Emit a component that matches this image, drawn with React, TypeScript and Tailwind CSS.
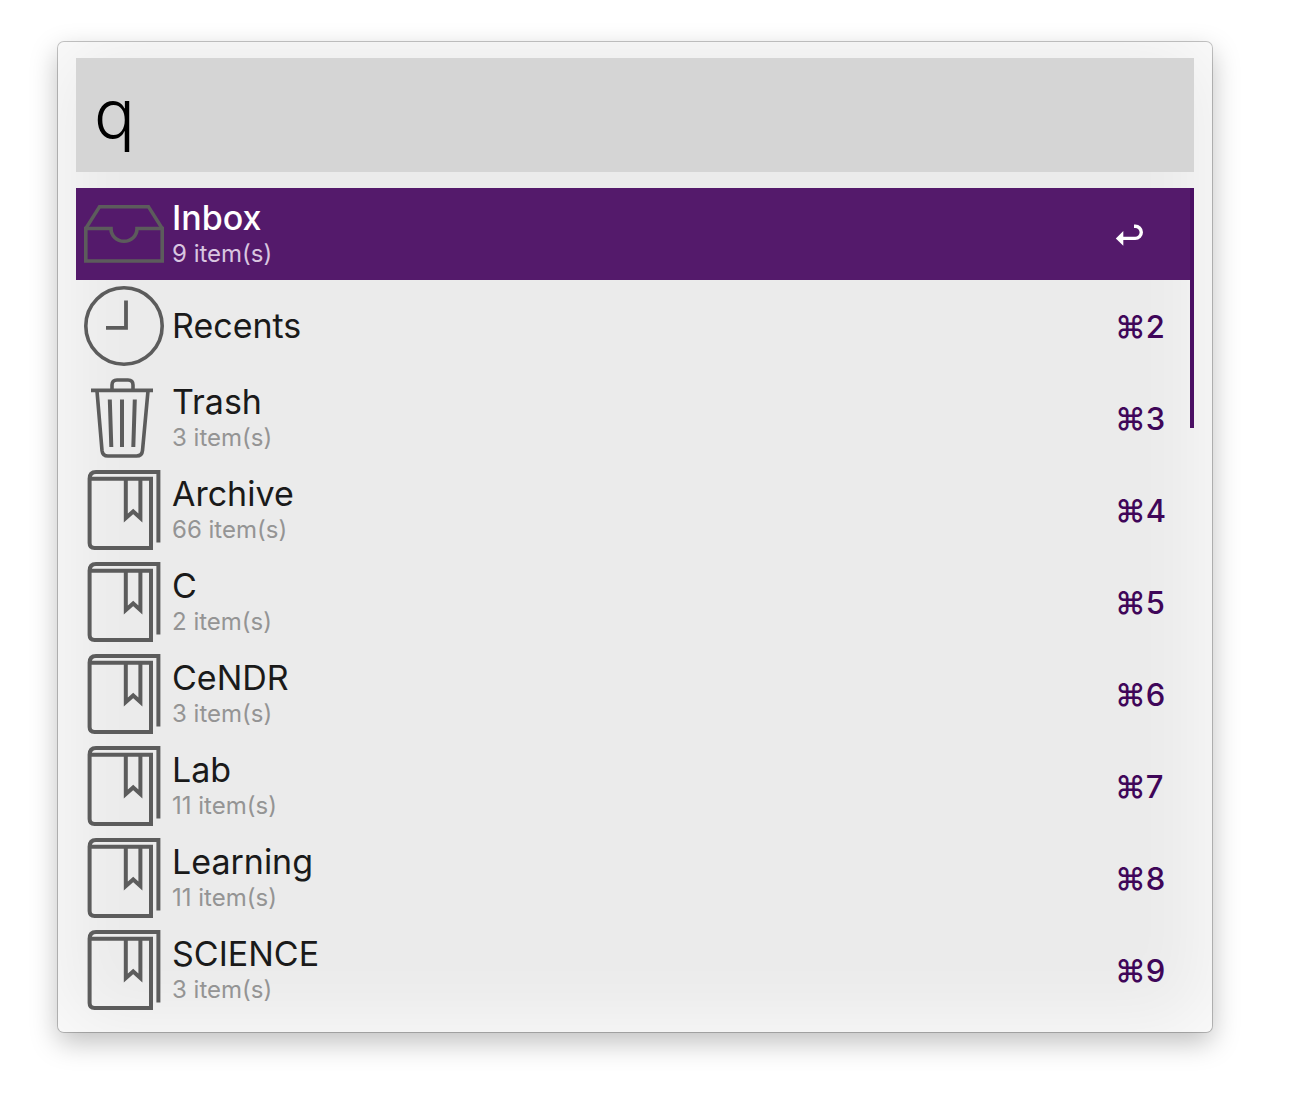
import { useState } from "react";

type IconName = "inbox" | "clock" | "trash" | "book";

interface Item {
  title: string;
  subtitle?: string;
  icon: IconName;
}

const items: Item[] = [
  { title: "Inbox", subtitle: "9 item(s)", icon: "inbox" },
  { title: "Recents", icon: "clock" },
  { title: "Trash", subtitle: "3 item(s)", icon: "trash" },
  { title: "Archive", subtitle: "66 item(s)", icon: "book" },
  { title: "C", subtitle: "2 item(s)", icon: "book" },
  { title: "CeNDR", subtitle: "3 item(s)", icon: "book" },
  { title: "Lab", subtitle: "11 item(s)", icon: "book" },
  { title: "Learning", subtitle: "11 item(s)", icon: "book" },
  { title: "SCIENCE", subtitle: "3 item(s)", icon: "book" },
];

function ItemIcon({ name }: { name: IconName }) {
  return (
    <svg
      viewBox="0 0 80 80"
      className="size-20 shrink-0"
      fill="none"
      stroke="#5c5c5c"
      strokeWidth="4"
      aria-hidden="true"
    >
      {name === "inbox" && (
        <>
          <path d="M1.8 34.5 15.5 12.8H64.5L78.2 34.5" strokeWidth="3.4" />
          <path
            d="M1.8 34.5H27C27 42 33 47.3 40 47.3S53 42 53 34.5H78.2V67H1.8Z"
            strokeWidth="3.6"
          />
        </>
      )}
      {name === "clock" && (
        <>
          <circle cx="40" cy="40" r="38.2" strokeWidth="3.6" />
          <path d="M42 14.5V41.8H22" strokeWidth="3.8" />
        </>
      )}
      {name === "trash" && (
        <>
          <path d="M7 12.4H69M28 12V7Q28 2 33 2H44Q49 2 49 7V12" strokeWidth="3.6" />
          <path d="M13 13 18 72.5Q18.6 78 24 78H52.5Q58 78 58.5 72.5L64 13" strokeWidth="3.6" />
          <path d="M25.8 21.5 27.3 69M38 21.5V69M50.8 21.5 49.3 69" />
        </>
      )}
      {name === "book" && (
        <>
          <path d="M5.6 8V73Q5.6 78 10.6 78H67V8.8H5.6Q5.6 2 12 2H74.4V72.5" />
          <path d="M41.8 9V48L49.2 41.5 56.4 48V9" />
        </>
      )}
    </svg>
  );
}

function ReturnIcon() {
  return (
    <svg viewBox="0 0 28 24" className="h-6 w-7" fill="none" aria-hidden="true">
      <path
        d="M19 3.2H20.2A6 6 0 0 1 20.2 15.4H6.5"
        stroke="#fff"
        strokeWidth="3.4"
      />
      <path d="M0.8 15.4 8.3 8V22.8Z" fill="#fff" />
    </svg>
  );
}

export default function App() {
  const [query, setQuery] = useState("q");
  const [selected, setSelected] = useState(0);

  return (
    <main className="min-h-screen bg-white pt-[42px] pr-[84px] pb-20 pl-[58px] font-['Inter',sans-serif]">
      <section className="rounded-md bg-[#ebebeb] px-[18px] py-4 shadow-[inset_0_0_80px_rgba(255,255,255,0.9),0_0_0_1px_rgba(0,0,0,0.22),0_10px_28px_rgba(0,0,0,0.26)]">
        <input
          type="text"
          aria-label="Search"
          value={query}
          onChange={(e) => setQuery(e.target.value)}
          className="block h-[114px] w-full bg-[#d5d5d5] px-[18px] pb-1 text-[68px] leading-none font-light text-black outline-none"
        />
        <div className="relative mt-4">
          <ul>
            {items.map((item, i) => {
              const active = i === selected;
              return (
                <li key={item.title}>
                  <button
                    type="button"
                    onClick={() => setSelected(i)}
                    aria-pressed={active}
                    className={`flex h-[92px] w-full items-center gap-2 pr-7 pl-2 text-left ${active ? "bg-[#541a6b]" : ""}`}
                  >
                    <ItemIcon name={item.icon} />
                    <span className="flex flex-1 flex-col">
                      <span
                        className={`text-[34px] leading-10 ${active ? "font-medium text-white" : "text-[#1a1a1a]"}`}
                      >
                        {item.title}
                      </span>
                      {item.subtitle && (
                        <span
                          className={`text-2xl leading-8 ${active ? "text-[#d9c6e0]" : "text-[#949494]"}`}
                        >
                          {item.subtitle}
                        </span>
                      )}
                    </span>
                    <span className="w-[51px] pt-0.5 text-[31px] leading-10 font-medium whitespace-nowrap text-[#3f0659]">
                      {active ? <ReturnIcon /> : `⌘${i + 1}`}
                    </span>
                  </button>
                </li>
              );
            })}
          </ul>
          <div className="absolute top-0 right-0 h-60 w-1 bg-[#4b1064]" />
        </div>
      </section>
    </main>
  );
}
